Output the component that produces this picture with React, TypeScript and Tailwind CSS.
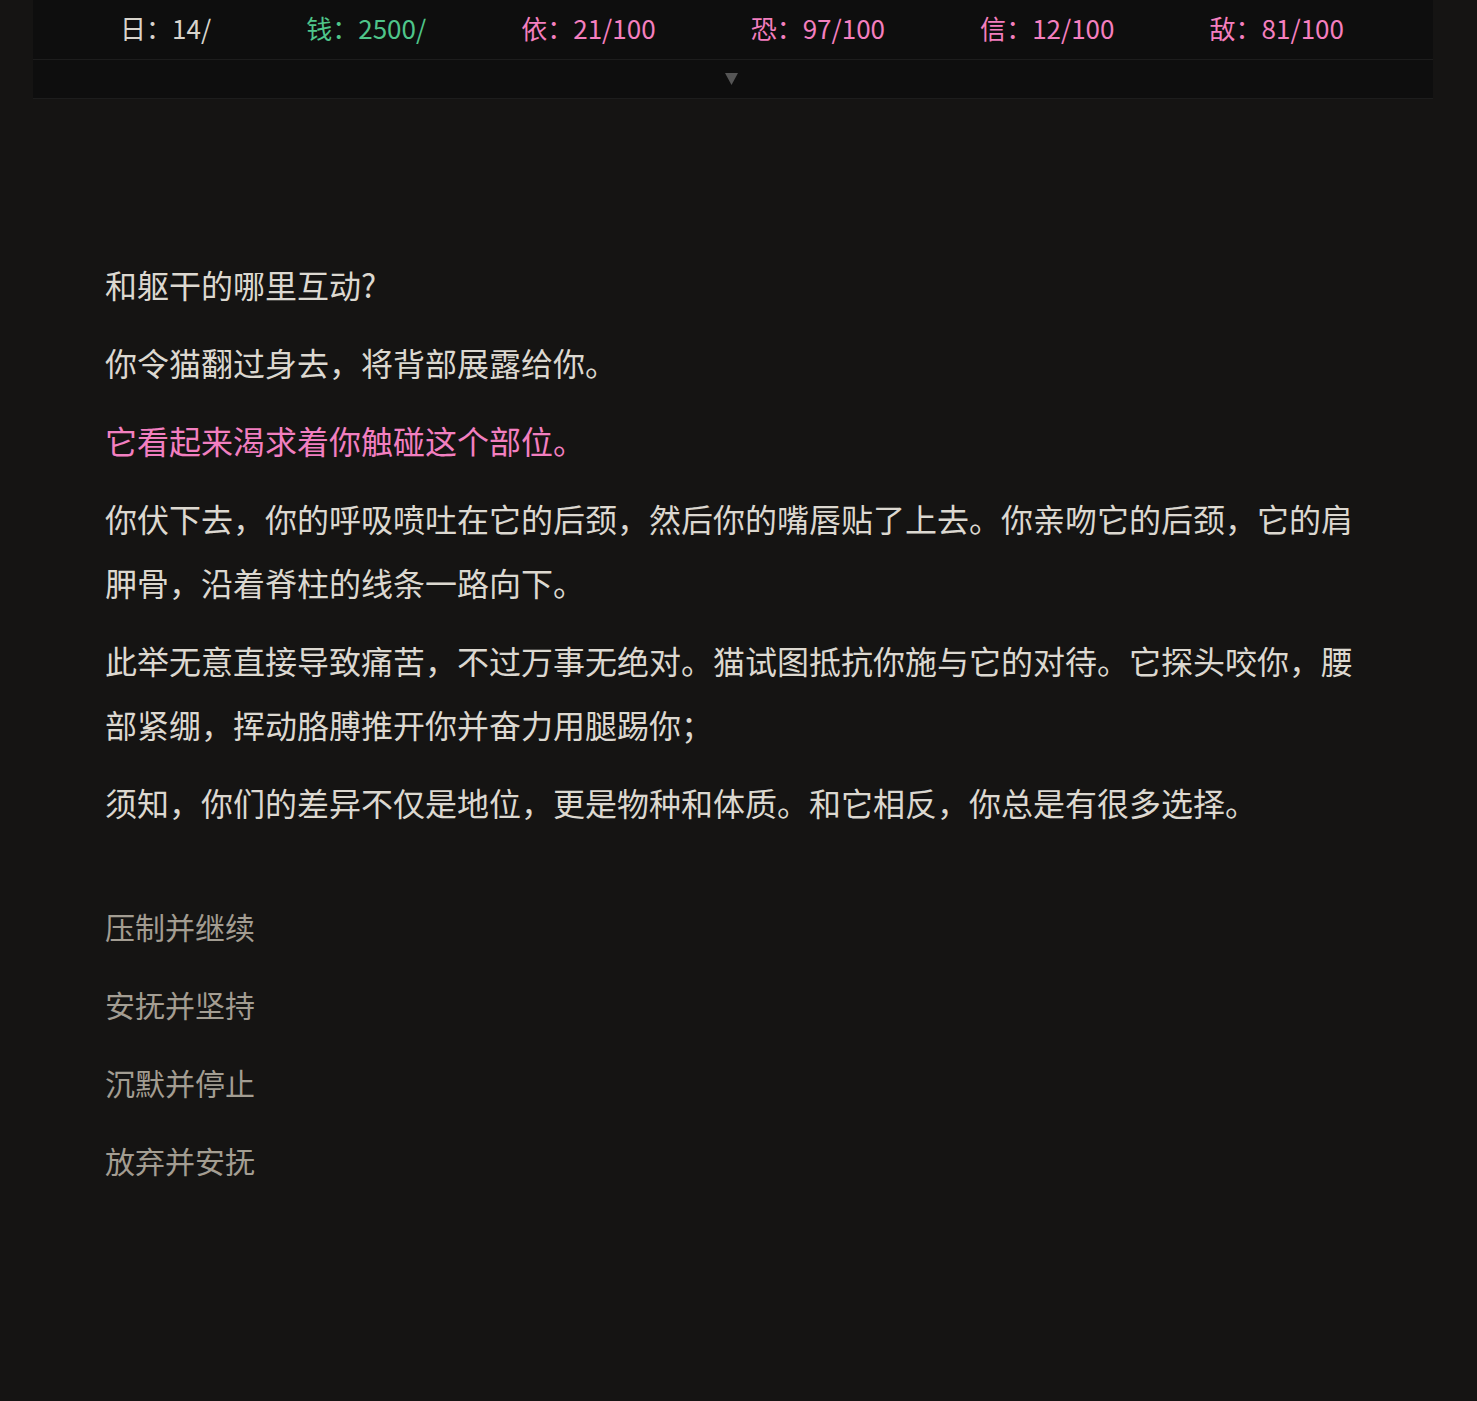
import React from "react";

// ── Data ──────────────────────────────────────────────────────────────────────

const STATS: { label: string; value: string; color: string }[] = [
  { label: "日", value: "14/", color: "text-[#d8d4cc]" },
  { label: "钱", value: "2500/", color: "text-[#4fc58a]" },
  { label: "依", value: "21/100", color: "text-[#f47fbf]" },
  { label: "恐", value: "97/100", color: "text-[#f47fbf]" },
  { label: "信", value: "12/100", color: "text-[#f47fbf]" },
  { label: "敌", value: "81/100", color: "text-[#f47fbf]" },
];

const PARAGRAPHS: { text: string; pink?: boolean }[] = [
  { text: "和躯干的哪里互动?" },
  { text: "你令猫翻过身去，将背部展露给你。" },
  { text: "它看起来渴求着你触碰这个部位。", pink: true },
  {
    text: "你伏下去，你的呼吸喷吐在它的后颈，然后你的嘴唇贴了上去。你亲吻它的后颈，它的肩胛骨，沿着脊柱的线条一路向下。",
  },
  {
    text: "此举无意直接导致痛苦，不过万事无绝对。猫试图抵抗你施与它的对待。它探头咬你，腰部紧绷，挥动胳膊推开你并奋力用腿踢你；",
  },
  { text: "须知，你们的差异不仅是地位，更是物种和体质。和它相反，你总是有很多选择。" },
];

const CHOICES = ["压制并继续", "安抚并坚持", "沉默并停止", "放弃并安抚"];

// ── App ───────────────────────────────────────────────────────────────────────

export default function App() {
  return (
    <div
      className="min-h-[1401px] w-full bg-[#151413]"
      style={{ fontFamily: '"Noto Sans CJK SC", "Noto Sans", sans-serif' }}
    >
      <div className="ml-[33px] w-[1400px]">
        {/* Status bar */}
        <div className="bg-[#0e0e0e]">
          <div className="flex h-[60px] items-center justify-between border-b border-[#1d1d1d] pl-[87px] pr-[89px] pb-[5px] text-[26px]">
            {STATS.map((s) => (
              <span key={s.label} className={`${s.color} whitespace-nowrap`}>
                {s.label}：{s.value}
              </span>
            ))}
          </div>
          <div className="flex h-[39px] items-center justify-center border-b border-[#1d1d1d]">
            <svg width="13" height="12" viewBox="0 0 13 12" className="-ml-[4px]">
              <polygon points="0,0 13,0 6.5,12" fill="#555" />
            </svg>
          </div>
        </div>

        {/* Story text */}
        <div className="px-[72px] pt-[153px]">
          {PARAGRAPHS.map((p, i) => (
            <p
              key={i}
              className={`mb-[14px] text-[32px] leading-[64px] ${
                p.pink ? "text-[#f27fc0]" : "text-[#dcd8d0]"
              }`}
            >
              {p.text}
            </p>
          ))}

          {/* Choices */}
          <div className="mt-[53px] flex flex-col">
            {CHOICES.map((c) => (
              <button
                key={c}
                type="button"
                className="h-[78px] text-left text-[30px] leading-[78px] text-[#a39d92]"
              >
                {c}
              </button>
            ))}
          </div>
        </div>
      </div>
    </div>
  );
}
